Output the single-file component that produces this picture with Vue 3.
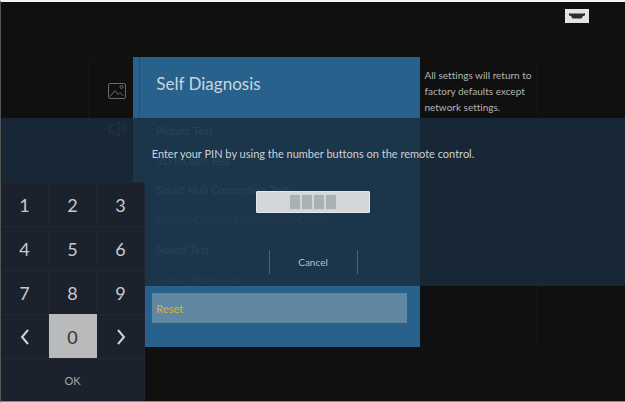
<template>
  <main class="screen">
    <header class="topbar">
      <svg class="port" viewBox="0 0 24 14" role="img" aria-label="HDMI source">
        <rect width="24" height="14" fill="#e4e4e4" />
        <path d="M4 4h16v2.500l-2 .5-1.500 2.500h-9L6 7l-2-.5z" fill="#2c2c2c" />
        <path d="M4.500 4.500h15" stroke="#8a8a8a" />
      </svg>
    </header>

    <div class="settings">
      <nav class="rail" aria-label="Categories">
        <svg class="rail-icon picture" viewBox="0 0 20 18">
          <rect x="1.500" y="1.500" width="17" height="15" rx="1.500" />
          <path d="M3 14.500l5-6 3 4 2-2 3.500 3.500" />
          <circle cx="14.500" cy="5" r="1.500" />
        </svg>
        <svg class="rail-icon sound" viewBox="0 0 20 18">
          <path d="M2 6h4l6-5v16l-6-5H2zM15 5v8M18 3v12" />
        </svg>
        <svg class="rail-icon channel" viewBox="0 0 20 18">
          <circle cx="10" cy="10" r="6" />
          <path d="M7 1l3 3 3-3" />
        </svg>
        <svg class="rail-icon support" viewBox="0 0 20 18">
          <path d="M2 2h15v11h-7l-3 4v-4H2z" />
        </svg>
      </nav>

      <section class="panel">
        <h1 class="title">Self Diagnosis</h1>
        <ul class="menu">
          <li v-for="item in items" :key="item.label" class="menu-row">
            <button
              type="button"
              class="menu-item"
              :class="{ active: item.label === selected, disabled: item.disabled }"
              :disabled="item.disabled"
              @click="selected = item.label"
            >{{ item.label }}</button>
          </li>
        </ul>
      </section>

      <p class="help">All settings will return to factory defaults except network settings.</p>
    </div>

    <form class="dialog" @submit.prevent>
      <label class="prompt" for="pin">Enter your PIN by using the number buttons on the remote control.</label>
      <div class="pin-box">
        <input id="pin" v-model="pin" class="pin-input" type="password" maxlength="4" inputmode="numeric" />
        <span v-for="n in 4" :key="n" class="pin-cell" :class="{ filled: n <= pin.length }"></span>
      </div>
      <button type="button" class="cancel" @click="pin = ''">Cancel</button>
    </form>

    <div class="keypad">
      <button
        v-for="key in keys"
        :key="key"
        type="button"
        class="key"
        :class="{ focused: key === '0' }"
        @click="press(key)"
      >{{ key }}</button>
      <button type="button" class="key arrow prev" aria-label="Previous" @click="pin = pin.slice(0, -1)">
        <svg viewBox="0 0 10 16"><path d="M8 1L2 8l6 7" /></svg>
      </button>
      <button type="button" class="key arrow next" aria-label="Next">
        <svg viewBox="0 0 10 16"><path d="M2 1l6 7-6 7" /></svg>
      </button>
      <button type="button" class="key ok">OK</button>
    </div>
  </main>
</template>

<script setup>
import { ref } from 'vue'

const items = [
  { label: 'Picture Test' },
  { label: '3D Picture Test' },
  { label: 'Smart Hub Connection Test' },
  { label: 'Motion Control Environment Check', disabled: true },
  { label: 'Sound Test' },
  { label: 'Signal Information', disabled: true },
  { label: 'Reset' }
]
const keys = ['1', '2', '3', '4', '5', '6', '7', '8', '9', '0']

const selected = ref('Reset')
const pin = ref('')

function press(key) {
  if (pin.value.length < 4) pin.value += key
}
</script>

<style>
body { margin: 0; background: #101010; }
</style>

<style scoped>
.screen {
  position: relative;
  box-sizing: border-box;
  min-height: 100vh;
  border-top: 2px solid #f4f4f4;
  border-left: 1px solid #555;
  border-bottom: 1px solid #8c8888;
  background: #101010;
  color: #c4c8cb;
  font-family: Lato, sans-serif;
  font-size: 11px;
  font-variant-ligatures: none;
}
button { margin: 0; padding: 0; border: 0; background: none; color: inherit; font: inherit; cursor: pointer; }
.topbar { display: flex; justify-content: flex-end; height: 55px; padding: 7px 36px 0 0; box-sizing: border-box; }
.port { width: 24px; height: 14px; }

.settings { display: flex; min-height: 290px; margin-left: 14%; }
.rail { flex: none; box-sizing: border-box; width: 45px; padding: 24px 0 0 18px; border: 1px solid #151515; border-right: 0; display: flex; flex-direction: column; }
.rail-icon { width: 20px; height: 18px; fill: none; stroke: #6a6a6a; stroke-width: 1; }
.sound { margin-top: 20px; stroke: #666; }
.channel { margin-top: 18px; stroke: #333; }
.support { margin-top: auto; margin-bottom: 24px; stroke: #444; }
.panel {
  flex: 0 0 53.5%;
  box-sizing: border-box;
  display: flex;
  flex-direction: column;
  padding: 0 13px 24px 13px;
  border-left: 6px solid #28628c;
  background: #28628c;
  box-shadow: inset 1px 0 #1f5278;
}
.title { margin: 0; padding-left: 4px; font-size: 17px; font-weight: 400; line-height: 54px; height: 59px; color: #ccd4da; }
.menu { flex: 1; display: flex; flex-direction: column; margin: 0; padding: 0; list-style: none; }
.menu-row { flex: 1; display: flex; }
.menu-item { flex: 1; padding-left: 4px; text-align: left; color: #a0acb6; }
.menu-item.disabled { color: #5c84a0; }
.menu-item.active { background: #6088a3; color: #d6b52c; }
.help { flex: 0 0 117px; box-sizing: border-box; margin: 0; padding: 9px 4px; border: 1px solid #141414; border-left: 0; font-size: 10px; line-height: 16px; color: #b4b4b4; }

.dialog {
  position: absolute;
  top: 116px;
  left: 0;
  right: 0;
  height: 168px;
  box-sizing: border-box;
  padding-top: 28px;
  display: flex;
  flex-direction: column;
  align-items: center;
  background: rgba(25, 44, 62, .84);
}
.prompt { line-height: 16px; color: #ccd2d6; }
.pin-box { position: relative; display: flex; justify-content: center; align-items: center; gap: 2px; width: 114px; height: 22px; margin-top: 29px; box-sizing: border-box; border: 1px solid #e8e8e8; border-radius: 1px; background: #d4d7d9; }
.pin-input { position: absolute; inset: 0; width: 100%; border: 0; padding: 0; opacity: 0; }
.pin-cell { width: 10px; height: 14px; background: #a8b2b5; }
.pin-cell.filled { background: #5d6a70; }
.cancel { width: 89px; height: 24px; margin-top: 37px; border-left: 1px solid #4a6377; border-right: 1px solid #4a6377; font-size: 10px; color: #b4c0c8; }

.keypad {
  position: absolute;
  left: 0;
  bottom: 0;
  width: 144px;
  display: grid;
  grid-template-columns: repeat(3, 1fr);
  grid-template-rows: repeat(4, 44px) 43px;
  background: #1b212d;
}
.key { border-top: 1px solid #222834; border-right: 1px solid #1f2531; font-size: 18px; color: #c8cacd; }
.key.focused { grid-column: 2; grid-row: 4; border-color: #b9babc; background: #b9babc; color: #333; }
.prev { grid-column: 1; grid-row: 4; }
.next { grid-column: 3; grid-row: 4; }
.arrow svg { display: block; width: 10px; height: 16px; margin: 0 auto; fill: none; stroke: #d0d2d4; stroke-width: 2; }
.ok { grid-column: 1 / -1; font-size: 11px; color: #a4a8ad; }
</style>
